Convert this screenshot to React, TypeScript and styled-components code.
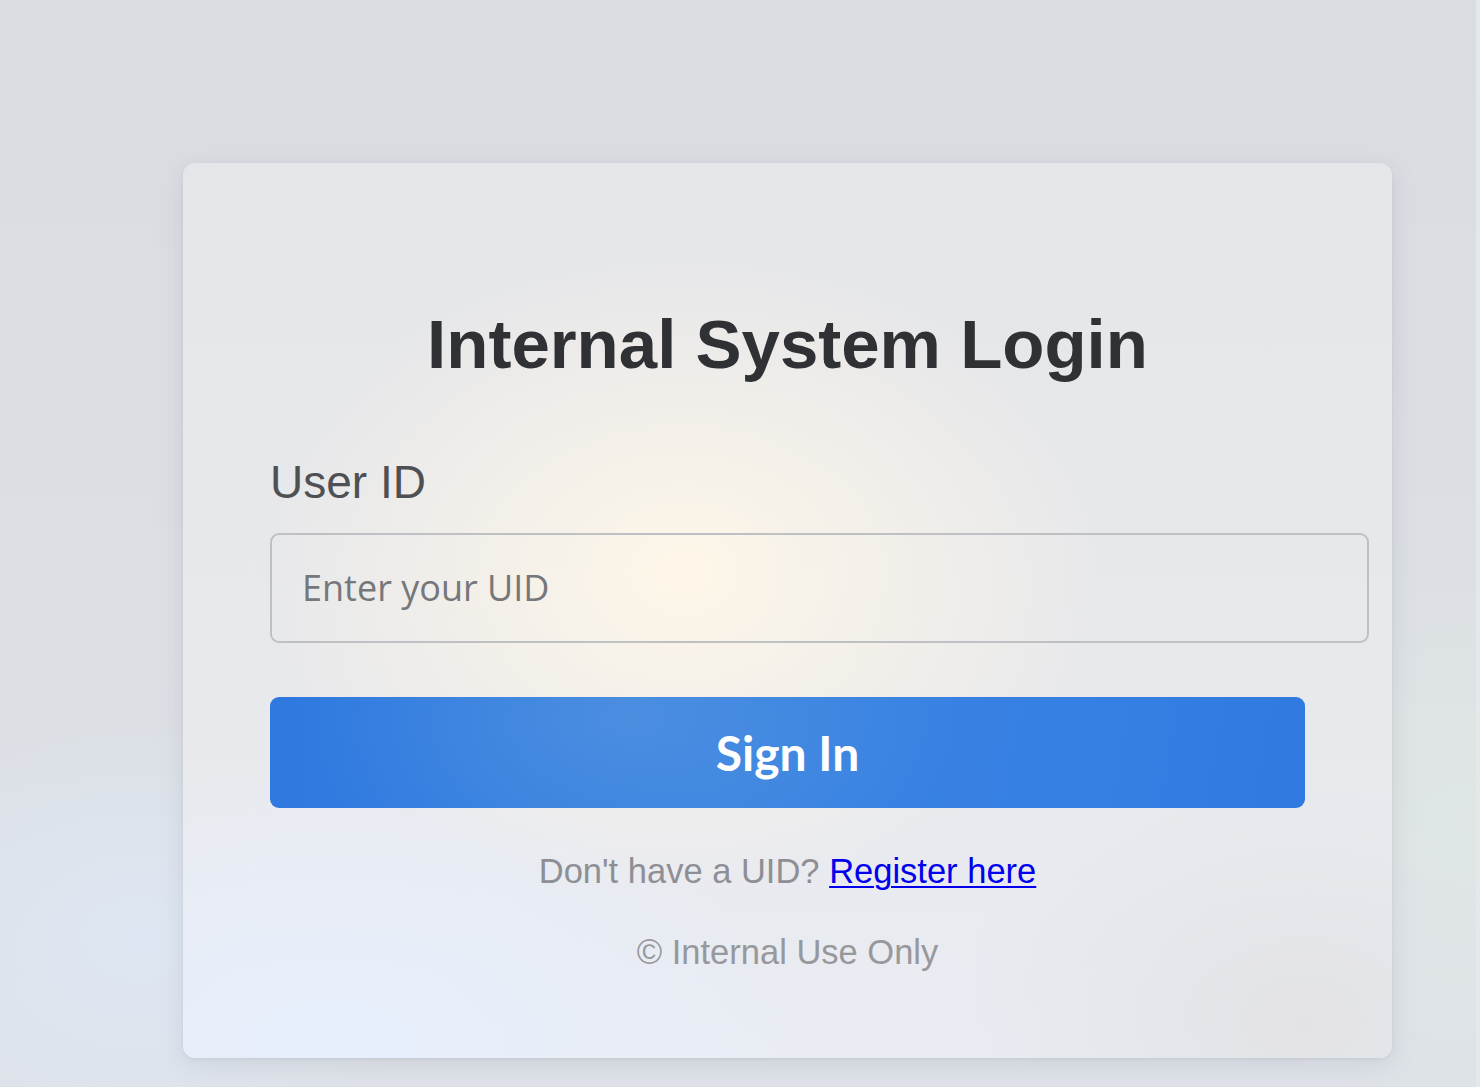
import React from "react";
import styled, { createGlobalStyle } from "styled-components";

const GlobalStyle = createGlobalStyle`
  html, body {
    margin: 0;
    padding: 0;
  }
  body {
    font-family: "Liberation Sans", Arial, sans-serif;
    background: #dcdfe4;
  }
  * { box-sizing: border-box; }
`;

const Page = styled.div`
  display: flex;
  min-height: 1087px;
  width: 1480px;
  overflow: hidden;
  background:
    radial-gradient(ellipse 300px 220px at 140px 940px, rgba(222, 232, 246, 0.8), rgba(222, 232, 246, 0) 100%),
    radial-gradient(ellipse 300px 300px at 1460px 820px, rgba(226, 236, 230, 0.5), rgba(226, 236, 230, 0) 100%),
    linear-gradient(180deg, #d9dce1 0%, #dcdfe4 60%, #dee2e8 100%);
`;

const Main = styled.main`
  flex: 1;
  padding: 163px 84px 29px 183px;
`;

const ScrollTrack = styled.div`
  width: 4px;
  background: #e6e7e9;
`;

const Card = styled.section`
  display: flex;
  flex-direction: column;
  align-items: stretch;
  width: 1209px;
  height: 895px;
  padding: 142px 87px 0 87px;
  border-radius: 12px;
  background:
    radial-gradient(ellipse 420px 320px at 500px 410px, rgba(255, 247, 232, 0.95), rgba(255, 247, 232, 0) 100%),
    radial-gradient(ellipse 460px 280px at 150px 880px, rgba(231, 239, 253, 1), rgba(231, 239, 253, 0) 100%),
    radial-gradient(ellipse 360px 240px at 1120px 860px, rgba(226, 226, 229, 0.9), rgba(226, 226, 229, 0) 100%),
    linear-gradient(180deg, #e5e6e9 0%, #e8e9ec 60%, #e9ecf3 100%);
  box-shadow: 0 6px 24px rgba(120, 128, 145, 0.18), 0 1px 3px rgba(120, 128, 145, 0.12);
`;

const Title = styled.h1`
  margin: 0;
  font-family: "Liberation Sans", Arial, sans-serif;
  font-weight: 700;
  font-size: 69px;
  line-height: 80px;
  color: #2f3135;
  text-align: center;
`;

const Field = styled.div`
  display: flex;
  flex-direction: column;
  margin-top: 71px;
`;

const Label = styled.label`
  font-family: "Liberation Sans", Arial, sans-serif;
  font-size: 46px;
  line-height: 52px;
  color: #4e5054;
`;

const Input = styled.input`
  box-sizing: content-box;
  width: 100%;
  margin-top: 25px;
  padding: 28px 30px;
  height: 50px;
  border: 2px solid #bfc0c3;
  border-radius: 9px;
  background: transparent;
  font-family: "Open Sans", sans-serif;
  font-size: 36px;
  line-height: 50px;
  color: #333;
  outline: none;
  &::placeholder {
    color: #76777a;
  }
`;

const Button = styled.button`
  margin-top: 54px;
  height: 111px;
  width: 100%;
  border: none;
  border-radius: 9px;
  background:
    radial-gradient(ellipse 340px 200px at 360px 20px, rgba(82, 146, 224, 0.75), rgba(82, 146, 224, 0) 100%),
    linear-gradient(100deg, #2e78df 0%, #3883e2 45%, #3780e3 75%, #3079e0 100%);
  color: #ffffff;
  font-family: Lato, "Open Sans", sans-serif;
  font-weight: 700;
  font-size: 48px;
  cursor: pointer;
`;

const Prompt = styled.p`
  margin: 43px 0 0;
  text-align: center;
  font-family: "Liberation Sans", Arial, sans-serif;
  font-size: 34.5px;
  line-height: 40px;
  color: #8e8f94;
`;

const RegisterLink = styled.a`
  color: #0000ee;
  text-decoration: underline;
  text-underline-offset: 3px;
  text-decoration-thickness: 2px;
`;

const Footer = styled.p`
  margin: 41px 0 0;
  text-align: center;
  font-family: "Liberation Sans", Arial, sans-serif;
  font-size: 34.5px;
  line-height: 40px;
  color: #97989c;
`;

export default function App() {
  return (
    <>
      <GlobalStyle />
      <Page>
        <Main>
          <Card>
            <Title>Internal System Login</Title>
            <Field>
              <Label htmlFor="uid">User ID</Label>
              <Input id="uid" type="text" placeholder="Enter your UID" />
            </Field>
            <Button type="button">Sign In</Button>
            <Prompt>
              Don't have a UID? <RegisterLink href="#">Register here</RegisterLink>
            </Prompt>
            <Footer>© Internal Use Only</Footer>
          </Card>
        </Main>
        <ScrollTrack />
      </Page>
    </>
  );
}
